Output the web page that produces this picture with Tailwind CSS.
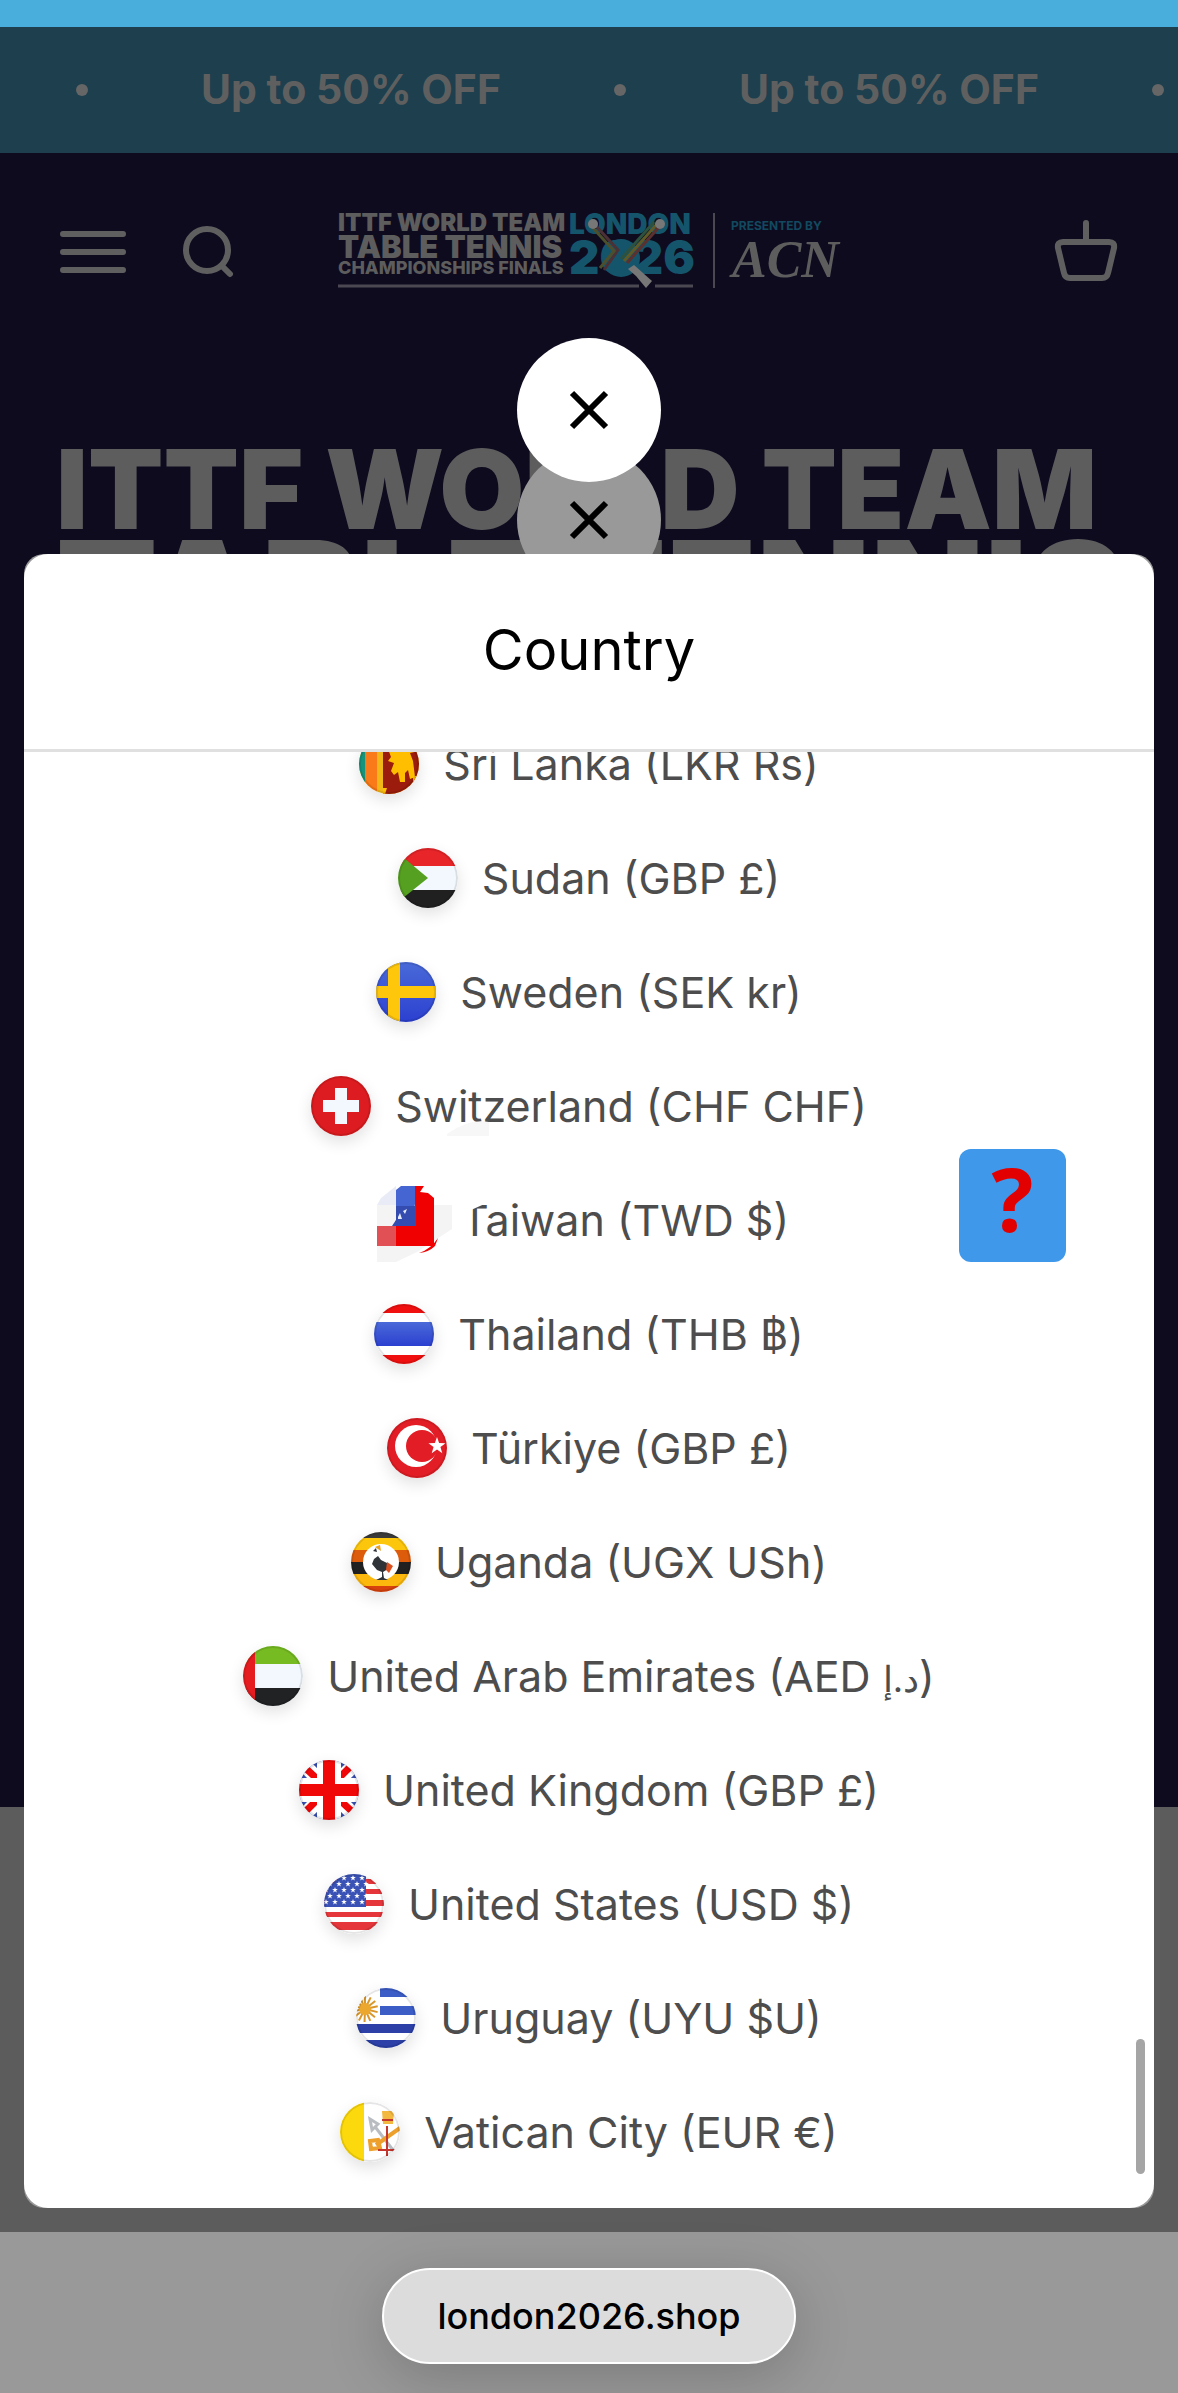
<!DOCTYPE html>
<html lang="en">
<head>
  <meta charset="UTF-8" />
  <meta name="viewport" content="width=device-width, initial-scale=1.0" />
  <title>london2026.shop</title>
  <script src="https://cdn.jsdelivr.net/npm/@tailwindcss/browser@4"></script>
</head>
<body class="relative flex flex-col min-h-screen overflow-hidden bg-[#999999] font-['Inter','Noto_Sans',sans-serif]">

  <!-- Status bar strip -->
  <div class="h-[27px] bg-[#49aedc]"></div>

  <!-- Announcement marquee -->
  <div class="h-[126px] bg-[#1d3f4e] overflow-hidden">
    <div class="flex items-center h-full pl-[76px] text-[#5f5f5f] text-[41px] font-bold whitespace-nowrap">
      <span class="size-3 rounded-full bg-[#666666] shrink-0"></span>
      <p class="w-[526px] text-center shrink-0">Up to 50% OFF</p>
      <span class="size-3 rounded-full bg-[#666666] shrink-0"></span>
      <p class="w-[526px] text-center shrink-0">Up to 50% OFF</p>
      <span class="size-3 rounded-full bg-[#666666] shrink-0"></span>
    </div>
  </div>

  <!-- Header and hero -->
  <main class="h-[1654px] bg-[#0e0b1f] text-[#5d5d5d]">
    <header class="flex items-center h-[196px] px-[60px]">
      <div class="flex items-center gap-14">
        <button aria-label="Menu">
          <svg class="w-[66px] h-12" viewBox="0 0 66 48" fill="none" stroke="#605f60" stroke-width="6" stroke-linecap="round"><path d="M3 7H63M3 25H63M3 43H63"/></svg>
        </button>
        <button aria-label="Search">
          <svg class="w-[52px] h-[54px]" viewBox="0 0 52 54" fill="none" stroke="#605f60" stroke-width="6" stroke-linecap="round"><circle cx="25" cy="26" r="21"/><path d="M41 43L48 50"/></svg>
        </button>
      </div>
      <a href="#" aria-label="London 2026 home" class="ml-[104px]">
        <svg class="w-[506px] h-[76px]" viewBox="0 0 506 76" font-family="Inter, sans-serif" font-weight="900" fill="#5d5d5d">
          <text x="0" y="18" font-size="24">ITTF WORLD TEAM</text>
          <text x="0" y="45" font-size="31">TABLE TENNIS</text>
          <text x="0" y="61" font-size="18" font-weight="800">CHAMPIONSHIPS FINALS</text>
          <path d="M0 73H301M317 73H355" stroke="#4b4852" stroke-width="3"/>
          <g fill="#15556c">
            <text x="231" y="21" font-size="28">LONDON</text>
            <text x="231" y="61" font-size="47">2026</text>
            <circle cx="283" cy="45" r="19"/>
          </g>
          <g fill="none" stroke-width="3">
            <path d="M258 13L280 37L266 57" stroke="#4b3036"/>
            <path d="M255 15L276 38L262 55" stroke="#4c4f2c"/>
            <path d="M322 13L289 50" stroke="#5b302f"/>
            <path d="M319 11L286 48" stroke="#5e5a28"/>
            <path d="M316 9L283 46" stroke="#2c513f"/>
          </g>
          <circle cx="255" cy="11" r="5" fill="#777"/>
          <circle cx="322" cy="11" r="5" fill="#777"/>
          <path d="M290 56L296 52L314 68L308 75L298 63Z" fill="#777"/>
          <path d="M376 0V75" stroke="#4b4852" stroke-width="2"/>
          <text x="393" y="17" font-size="12" font-weight="700" fill="#12495f">PRESENTED BY</text>
          <text x="394" y="64" font-size="52" font-style="italic" font-weight="700" font-family="Liberation Serif, serif">ACN</text>
        </svg>
      </a>
      <button aria-label="Basket" class="ml-auto">
        <svg class="w-[64px] h-[64px]" viewBox="0 0 64 64" fill="none" stroke="#605f60" stroke-width="6" stroke-linecap="round" stroke-linejoin="round"><path d="M32 4V22M9 23H55Q61 23 60 29L54 54Q53 59 48 59H16Q11 59 10 54L4 29Q3 23 9 23Z"/></svg>
      </button>
    </header>
    <h1 class="flex flex-col px-14 pt-[88px] font-black whitespace-nowrap">
      <span class="text-[110px] leading-[104px]">ITTF WORLD TEAM</span>
      <span class="text-[148px] leading-[108px]">TABLE TENNIS</span>
    </h1>
  </main>
  <div class="h-[425px] bg-[#5c5c5c]"></div>

  <!-- Close buttons of the two stacked drawers -->
  <button aria-label="Close menu" class="absolute top-[448px] left-1/2 -translate-x-1/2 grid place-items-center size-36 rounded-full bg-[#999999]">
    <svg class="size-10" viewBox="0 0 40 40" stroke="#000" stroke-width="6"><path d="M3 3L37 37M37 3L3 37"/></svg>
  </button>
  <button aria-label="Close" class="absolute top-[338px] left-1/2 -translate-x-1/2 grid place-items-center size-36 rounded-full bg-white">
    <svg class="size-10" viewBox="0 0 40 40" stroke="#000" stroke-width="6"><path d="M3 3L37 37M37 3L3 37"/></svg>
  </button>

  <!-- Country drawer -->
  <div class="absolute inset-x-6 top-[554px] bottom-[185px] rounded-[20px] bg-[#999999]"></div>
  <section class="absolute inset-x-6 top-[554px] bottom-[185px] flex flex-col rounded-3xl bg-white overflow-hidden">
    <h2 class="flex items-center justify-center h-[198px] shrink-0 border-b-3 border-[#e0e0e0] pb-1 text-[56px] text-black">Country</h2>
    <div class="flex-1 min-h-0 flex flex-col justify-end overflow-hidden pb-[19px]">
      <ul id="countries" class="flex flex-col text-[43px] text-[#4d4d4d]"></ul>
    </div>
    <span class="absolute right-[9px] bottom-[34px] w-[9px] h-[135px] rounded-full bg-[#a5a5a5]"></span>
    <span class="absolute right-[88px] top-[595px] grid place-items-center w-[107px] h-[113px] rounded-xl bg-[#3f98ea] text-[#e20000] text-[88px] leading-none font-bold font-['Open_Sans',sans-serif] pb-4">?</span>
  </section>

  <!-- Browser address pill -->
  <div class="absolute bottom-[29px] left-1/2 -translate-x-1/2 grid place-items-center w-[414px] h-24 rounded-full border-2 border-white bg-[#dcdcdc] text-black text-[36px] font-medium shadow-[0_12px_60px_rgba(0,0,0,0.2)]">london2026.shop</div>

  <script>
    const star = (x, y, r, fill) => {
      let pts = "";
      for (let i = 0; i < 10; i++) {
        const a = Math.PI * i / 5 - Math.PI / 2;
        const d = i % 2 ? r * 0.4 : r;
        pts += (x + d * Math.cos(a)) + "," + (y + d * Math.sin(a)) + " ";
      }
      return `<polygon points="${pts}" fill="${fill}"/>`;
    };

    let usStars = "";
    for (let r = 0; r < 5; r++)
      for (let c = 0; c < 5; c++) usStars += star(2 + c * 9 + (r % 2 ? 4 : 0), 4 + r * 6, 3, "#fff");

    let rays = "";
    for (let i = 0; i < 14; i++) rays += `<path d="M9 21V8" stroke="#d9972b" stroke-width="2" transform="rotate(${i * 26} 9 21)"/>`;

    const flags = {
      lk: `<path fill="#f2b818" d="M0 0h60v60H0z"/><path fill="#16947c" d="M0 0h6v60H0z"/><path fill="#fa7918" d="M6 0h12v60H6z"/><path fill="#9b1c0c" d="M24 0h36v60H24z"/><path fill="#ffbe00" d="M34 4l6 8 4-8 12 3 4 10-9 2 3 8 2 16-5 2-2-9-3 3v9h-5l-2-10-4 3-3-4 3-8-6-2 3-4-3-8 5-2zM24 54h4l-2 6h-2zM54 42h6v6h-6z"/>`,
      sd: `<path fill="#f2f8fd" d="M0 0h60v60H0z"/><path fill="#e82529" d="M0 0h60v18H0z"/><path fill="#202020" d="M0 42h60v18H0z"/><path fill="#55a020" d="M0 5L30 30L0 54z"/>`,
      se: `<path fill="url(#blue)" d="M0 0h60v60H0z"/><path fill="#ffc70b" d="M12 0h12v60H12zM0 24h60v12H0z"/>`,
      ch: `<path fill="#dc1c20" d="M0 0h60v60H0z"/><path fill="#f2f8fd" d="M24 12h12v12h12v12H36v12H24V36H12V24h12z"/>`,
      th: `<path fill="#fff" d="M0 0h60v60H0z"/><path fill="#f01010" d="M0 0h60v9H0zM0 51h60v9H0z"/><path fill="url(#blue)" d="M0 18h60v24H0z"/>`,
      tr: `<path fill="#e31d25" d="M0 0h60v60H0z"/><circle cx="29" cy="28" r="21" fill="#fff"/><circle cx="35" cy="28" r="16" fill="#e31d25"/>` + star(50, 28, 9, "#fff"),
      ug: `<path fill="#3a3a3a" d="M0 0h60v6H0z"/><path fill="#fcc60c" d="M0 6h60v12H0z"/><path fill="#dc5c0c" d="M0 18h60v12H0z"/><path fill="#202020" d="M0 30h60v12H0z"/><path fill="#fcb80c" d="M0 42h60v12H0z"/><path fill="#d8420c" d="M0 54h60v6H0z"/><circle cx="30" cy="30" r="18" fill="#fff"/><path fill="#303438" d="M25 16l-3 3 4 1 1 4-4 3-2 5 5 6 5 2v5l-6 3h12l-4-2-1-6 5-3-1-6-6-3-3-4z"/><path d="M24 15l5-2 1 6z" fill="#e8a020"/><path d="M36 30l6 4-4 7-3-3z" fill="#dc5020"/>`,
      ae: `<path fill="#f2f8fd" d="M0 0h60v60H0z"/><path fill="#76bb22" d="M0 0h60v18H0z"/><path fill="#202224" d="M0 42h60v18H0z"/><path fill="#e51c20" d="M0 0h12v60H0z"/>`,
      gb: `<path fill="#3850b0" d="M0 0h60v60H0z"/><path stroke="#fff" stroke-width="14" d="M0 0L60 60M60 0L0 60"/><path stroke="#f00808" stroke-width="7" d="M0 2L60 58M58 0L0 58"/><path fill="#fff" d="M18 0h24v60H18zM0 18h60v24H0z"/><path fill="#f00808" d="M24 0h12v60H24zM0 24h60v12H0z"/>`,
      us: `<path fill="#fff" d="M0 0h60v60H0z"/><path fill="#e5373b" d="M0 5h60v5H0zM0 15h60v5H0zM0 26h60v6H0zM0 38h60v5H0zM0 48h60v8H0z"/><path fill="#3a52b5" d="M0 0h42v33H0z"/>` + usStars,
      uy: `<path fill="#fff" d="M0 0h60v60H0z"/><path fill="#3c5cc6" d="M24 0h36v9H24zM24 18h36v9H24z"/><path fill="#2c40a8" d="M0 36h60v9H0zM0 52h60v8H0z"/>` + rays + `<circle cx="9" cy="21" r="6" fill="#eba72e"/>`,
      va: `<path fill="#fff" d="M0 0h60v60H0z"/><path fill="#fcd90c" d="M0 0h24v60H0z"/><path fill="none" stroke="#b9bdc2" stroke-width="3" d="M30 17l8 5-6 6zM36 26l20 26"/><path fill="none" stroke="#eda02c" stroke-width="4" d="M60 26L36 43M30 39l8-1 2 8-9 1z"/><path fill="#f3b840" d="M42 9h12l-1 13H43z"/><path fill="none" stroke="#c4362e" stroke-width="2" d="M47 24v30M38 48h18M42 18h11"/>`
    };

    // the island flag is shown broken up into loose tiles
    const brokenFlag = `<svg class="w-[76px] h-[84px] -ml-3 -mr-4" viewBox="0 0 76 84">
      <path fill="#f4f4f5" d="M0 27h19v57h-19zM57 27h18v24L40 74L19 84V62h38z"/>
      <path fill="#e9ecf7" d="M4 20L19 8v19H0z"/>
      <path fill="#f00000" d="M38 8h9l-4 6 8 1 6 5v48H19V48h19V8zM42 75Q54 71 61 60L58 68Q52 74 42 75z"/>
      <path fill="#4565d2" d="M19 12l5-4h14v18l-4 22H17l2-6z"/><path fill="#344bb0" d="M19 28h20v20H15l4-6z"/>
      <path fill="#e05055" d="M0 48h19v20H0z"/><path fill="#e6edfa" d="M21 39l2-4 2 6-4 0zM26 33l4-2-2 5z"/>
    </svg>`;

    const countries = [
      ["lk", "Sri Lanka (LKR Rs)"],
      ["sd", "Sudan (GBP £)"],
      ["se", "Sweden (SEK kr)"],
      ["ch", "Switzerland (CHF CHF)"],
      ["tw", "Taiwan (TWD $)"],
      ["th", "Thailand (THB ฿)"],
      ["tr", "Türkiye (GBP £)"],
      ["ug", "Uganda (UGX USh)"],
      ["ae", "United Arab Emirates (AED <bdi class='text-[36px]'>د.إ</bdi>)"],
      ["gb", "United Kingdom (GBP £)"],
      ["us", "United States (USD $)"],
      ["uy", "Uruguay (UYU $U)"],
      ["va", "Vatican City (EUR €)"]
    ];

    // white scraps that lie over parts of two labels
    const scraps = {
      tw: `<svg class="absolute left-0 top-0 w-8 h-7" viewBox="0 0 32 28"><path fill="#fff" d="M0 0H28V14L10 22V28H0z"/></svg>`,
      ch: `<svg class="absolute left-[52px] bottom-0 w-12 h-5" viewBox="0 0 48 20"><path fill="#f7f7f7" d="M0 16Q22 0 42 4V18H0z"/></svg>`
    };

    document.getElementById("countries").innerHTML = countries.map(([code, label]) => `
      <li class="h-[114px] shrink-0">
        <button class="flex items-center justify-center gap-6 w-full h-full whitespace-nowrap">
          ${code === "tw" ? brokenFlag : `<span class="size-[60px] shrink-0 rounded-full overflow-hidden shadow-[0_6px_16px_rgba(0,0,0,0.12)]"><svg class="size-full" viewBox="0 0 60 60"><defs><linearGradient id="blue" x2="0" y2="1"><stop stop-color="#4a6ad8"/><stop offset="1" stop-color="#2c40d0"/></linearGradient></defs>${flags[code]}<circle cx="30" cy="30" r="29" fill="none" stroke="#000" stroke-opacity="0.1" stroke-width="2"/></svg></span>`}
          <span class="relative">${label}${scraps[code] || ""}</span>
        </button>
      </li>`).join("");
  </script>
</body>
</html>
